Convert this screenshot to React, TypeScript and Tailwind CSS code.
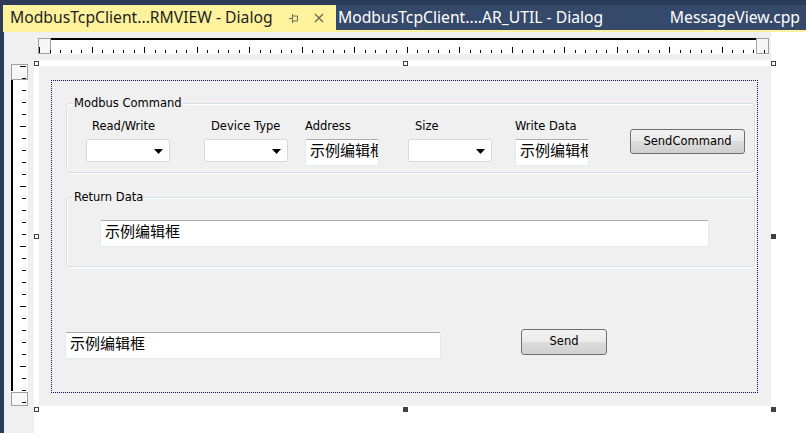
import React from "react";

// VS resource editor: dialog template with rulers and selection handles

const HANDLES: { x: number; y: number; filled: boolean }[] = [
  { x: 0, y: 1, filled: false },
  { x: 369, y: 1, filled: false },
  { x: 737, y: 1, filled: false },
  { x: 0, y: 174, filled: false },
  { x: 737, y: 174, filled: true },
  { x: 0, y: 347, filled: false },
  { x: 369, y: 347, filled: true },
  { x: 737, y: 347, filled: true },
];

function HRuler() {
  const ticks = Array.from({ length: 70 }, (_, k) => k);
  return (
    <svg width="732" height="16" className="block">
      <rect x="0.5" y="0.5" width="12" height="15" fill="#f7f7f7" stroke="#a0a0a0" />
      <rect x="13" y="0" width="705" height="16" fill="#fff" />
      <rect x="13" y="0" width="705" height="2" fill="#000" />
      <rect x="718.5" y="0.5" width="12" height="15" fill="#f7f7f7" stroke="#a0a0a0" />
      {ticks.map((k) => {
        const tall = k % 5 === 0;
        return (
          <rect
            key={k}
            x={Math.round(1 + 10.5 * k)}
            y={tall ? 9 : 12}
            width="1"
            height={tall ? 6 : 3}
            fill="#000"
          />
        );
      })}
    </svg>
  );
}

function VRuler() {
  const ticks = Array.from({ length: 29 }, (_, k) => k);
  return (
    <svg width="17" height="342" className="block">
      <rect x="0.5" y="0.5" width="16" height="15" fill="#f7f7f7" stroke="#a0a0a0" />
      <rect x="0" y="16" width="17" height="312" fill="#fff" />
      <rect x="0" y="16" width="2" height="311" fill="#000" />
      <rect x="0.5" y="328.5" width="16" height="13" fill="#f7f7f7" stroke="#a0a0a0" />
      {ticks.map((k) => {
        const tall = k % 5 === 0;
        return (
          <rect
            key={k}
            x={tall ? 9 : 11}
            y={2 + 12 * k}
            width={tall ? 6 : 4}
            height="1"
            fill="#000"
          />
        );
      })}
    </svg>
  );
}

function Combo() {
  return (
    <div className="relative h-[23px] w-full rounded-[2px] border border-[#d9d9d9] bg-white">
      <svg width="9" height="5" className="absolute right-[6px] top-[9px]">
        <polygon points="0,0 9,0 4.5,5" fill="#000" />
      </svg>
    </div>
  );
}

function Edit({ className }: { className: string }) {
  return (
    <div
      className={`overflow-hidden whitespace-nowrap rounded-[2px] border border-[#e3e9ef] border-t-[#abadb3] bg-white pl-[4px] font-['Noto_Sans_CJK_SC',sans-serif] text-[15px] leading-[20px] text-black ${className}`}
    >
      示例编辑框
    </div>
  );
}

function WinButton({ label, className }: { label: string; className: string }) {
  return (
    <div
      className={`flex items-center justify-center rounded-[3px] border border-[#707070] bg-[linear-gradient(#f2f2f2_0%,#ebebeb_50%,#dddddd_50%,#cfcfcf_100%)] text-black ${className}`}
    >
      {label}
    </div>
  );
}

function GroupBox({ title, className, children }: { title: string; className: string; children: React.ReactNode }) {
  return (
    <div
      className={`relative ml-[14px] h-[70px] w-[689px] rounded-[3px] border border-[#d5dfe5] shadow-[inset_1px_1px_0_#fff,1px_1px_0_#fff] ${className}`}
    >
      <span className="absolute left-[6px] top-[-8px] bg-[#f0f0f0] px-[1px] leading-[14px]">{title}</span>
      {children}
    </div>
  );
}

function Field({ label, indent, offset, width, children }: { label: string; indent: string; offset: string; width: string; children: React.ReactNode }) {
  return (
    <div className={`flex flex-col ${offset} ${width}`}>
      <span className={`leading-[14px] ${indent}`}>{label}</span>
      <div className="mt-[6px]">{children}</div>
    </div>
  );
}

export default function App() {
  return (
    <div className="flex h-[433px] w-[806px] flex-col overflow-hidden bg-[#2b3b58]">
      {/* document tabs */}
      <div className="ml-[3px] mt-[5px] flex h-[25px] bg-[#35496a] font-['Noto_Sans',sans-serif] text-[15.7px]">
        <div className="flex w-[333px] items-center bg-[#fff29d] pl-[7px] text-[#1e1e1e]">
          <span className="leading-[25px]">ModbusTcpClient...RMVIEW - Dialog</span>
          <svg width="10" height="10" className="ml-[16px]" viewBox="0 0 10 10">
            <path d="M0 5.5H3M3.5 1V10M3.5 3H8.5V8H3.5" stroke="#6f6b52" strokeWidth="1" fill="none" />
          </svg>
          <svg width="10" height="10" className="ml-[15px]" viewBox="0 0 10 10">
            <path d="M1 1L9 9M9 1L1 9" stroke="#6f6b52" strokeWidth="1.4" fill="none" />
          </svg>
        </div>
        <span className="ml-[2px] leading-[25px] text-white">ModbusTcpClient....AR_UTIL - Dialog</span>
        <span className="ml-auto mr-[6px] leading-[25px] text-white">MessageView.cpp</span>
      </div>
      <div className="ml-[3px] h-[2px] bg-[#fff29d]" />

      <div className="flex flex-1">
        <div className="w-[4px]" />
        <div className="flex flex-1 flex-col bg-white font-['DejaVu_Sans',sans-serif] text-[11.5px] text-black">
          {/* ruler band */}
          <div className="flex h-[28px]">
            <div className="w-[767px] bg-[#f0f0f0] pl-[34px] pt-[6px]">
              <HRuler />
            </div>
          </div>

          <div className="flex flex-1">
            <div className="w-[30px] bg-[#f0f0f0] pl-[7px] pt-[4px]">
              <VRuler />
            </div>

            {/* design canvas */}
            <div className="relative flex-1">
              <div className="ml-[5px] mt-[6px] h-[340px] w-[732px] bg-[#f0f0f0] pl-[12px] pt-[14px]">
                <div className="flex h-[313px] w-[707px] flex-col border border-dotted border-[#0000ff]">
                  <GroupBox title="Modbus Command" className="mt-[22px]">
                    <div className="flex items-start pt-[15px]">
                      <Field label="Read/Write" indent="pl-[6px]" offset="ml-[19px]" width="w-[84px]">
                        <Combo />
                      </Field>
                      <Field label="Device Type" indent="pl-[7px]" offset="ml-[34px]" width="w-[84px]">
                        <Combo />
                      </Field>
                      <Field label="Address" indent="pl-0" offset="ml-[17px]" width="w-[74px]">
                        <Edit className="h-[27px] w-[74px]" />
                      </Field>
                      <Field label="Size" indent="pl-[7px]" offset="ml-[29px]" width="w-[84px]">
                        <Combo />
                      </Field>
                      <Field label="Write Data" indent="pl-0" offset="ml-[23px]" width="w-[74px]">
                        <Edit className="h-[27px] w-[74px]" />
                      </Field>
                      <WinButton label="SendCommand" className="ml-[41px] mt-[10px] h-[25px] w-[115px]" />
                    </div>
                  </GroupBox>

                  <GroupBox title="Return Data" className="mt-[24px]">
                    <Edit className="ml-[33px] mt-[22px] h-[27px] w-[609px]" />
                  </GroupBox>

                  <div className="mt-[62px] flex items-start">
                    <Edit className="ml-[13px] mt-[3px] h-[27px] w-[376px]" />
                    <WinButton label="Send" className="ml-[80px] h-[26px] w-[86px]" />
                  </div>
                </div>
              </div>

              {HANDLES.map((h, i) => (
                <div
                  key={i}
                  className={`absolute h-[5px] w-[5px] border border-[#404040] ${h.filled ? "bg-[#404040]" : "bg-white"}`}
                  style={{ left: h.x, top: h.y }}
                />
              ))}
            </div>
          </div>
        </div>
      </div>
    </div>
  );
}
